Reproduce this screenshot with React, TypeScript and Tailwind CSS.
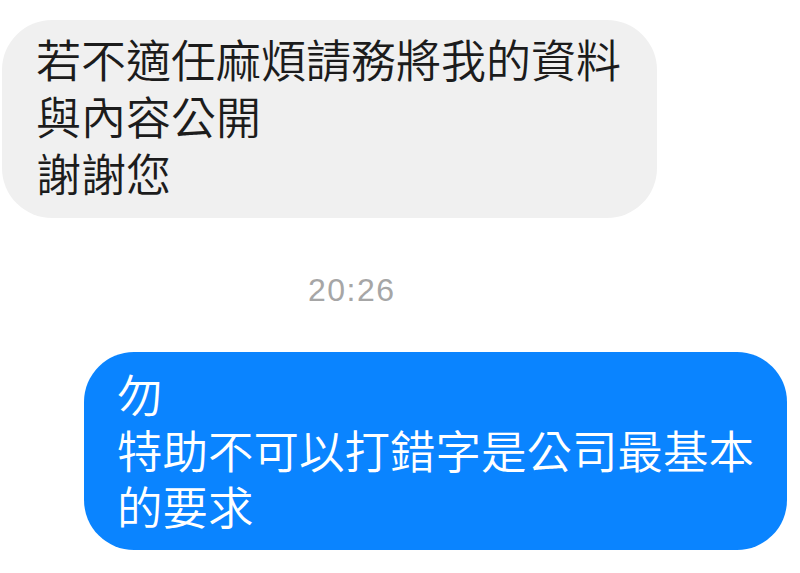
export default function App() {
  return (
    <div
      className="w-[800px] h-[573px] bg-white overflow-hidden flex flex-col pt-[20px]"
      style={{ fontFamily: '"Noto Sans CJK TC", "Noto Sans", sans-serif' }}
    >
      {/* received */}
      <div className="ml-[2px] w-[655px] h-[198px] rounded-[50px] bg-[#f0f0f0] pl-[34px] pt-[10px] text-[45px] leading-[57px] font-[350] text-[#1c1c1c] whitespace-nowrap">
        <div>若不適任麻煩請務將我的資料</div>
        <div>與內容公開</div>
        <div>謝謝您</div>
      </div>

      {/* timestamp */}
      <div
        className="ml-[308px] mt-[52px] h-[40px] leading-[40px] text-[32px] tracking-[1.5px] text-[#a6a6a6]"
        style={{ fontFamily: '"Liberation Sans", Arial, sans-serif' }}
      >
        20:26
      </div>

      {/* sent */}
      <div className="ml-[84px] mt-[42px] w-[703px] h-[198px] rounded-[50px] bg-[#0a84ff] pl-[33px] pt-[13px] text-[45.5px] leading-[56px] font-[350] text-white whitespace-nowrap">
        <div>勿</div>
        <div>特助不可以打錯字是公司最基本</div>
        <div>的要求</div>
      </div>
    </div>
  );
}
